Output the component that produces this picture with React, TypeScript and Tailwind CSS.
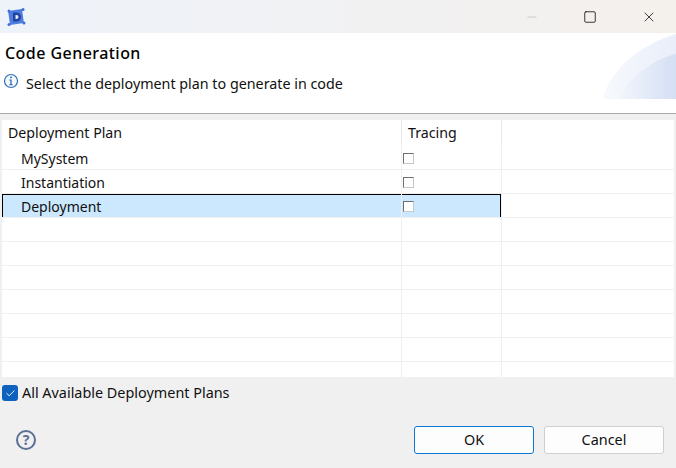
import { Check, Minus, Square, X } from "lucide-react";

const rows = ["MySystem", "Instantiation", "Deployment", "", "", "", "", "", "", ""];

function AppIcon() {
  return (
    <svg width="20" height="20" viewBox="0 0 20 20">
      <rect x="3" y="3" width="14" height="14" fill="#4d7de0" transform="rotate(-8 10 10)" />
      <circle cx="3" cy="4" r="1.5" fill="#3f6fd6" />
      <circle cx="17" cy="2.5" r="1.5" fill="#3f6fd6" />
      <circle cx="3" cy="17.5" r="1.5" fill="#3f6fd6" />
      <circle cx="18" cy="16" r="1.5" fill="#3f6fd6" />
      <path d="M7 5.5 h3.5 a4.5 4.5 0 0 1 0 9 h-3.5 z" fill="#21449f" />
      <path d="M9.5 8 h1 a2 2 0 0 1 0 4 h-1 z" fill="#e4ecfc" />
    </svg>
  );
}

function InfoIcon() {
  return (
    <svg width="16" height="16" viewBox="0 0 16 16" className="-ml-[2px] -mt-[6px]">
      <circle cx="8" cy="8" r="6.5" fill="#f4f9fe" stroke="#2f6fb5" strokeWidth="1.2" />
      <rect x="7.2" y="3.6" width="1.6" height="1.6" fill="#2a62a3" />
      <path d="M6.4 6.6 h2.2 v4.6 h1 v1 h-3.2 v-1 h1 v-3.6 h-1 z" fill="#2a62a3" />
    </svg>
  );
}

export default function App() {
  return (
    <div className="flex h-[468px] w-[676px] flex-col overflow-hidden bg-[#f0f0f0] font-['Noto_Sans',sans-serif] text-[14.4px] text-[#111]">
      {/* title bar */}
      <div className="flex h-[33px] shrink-0 items-center justify-between bg-gradient-to-r from-[#eef3fa] to-[#f4f0ec] pl-[6px]">
        <AppIcon />
        <div className="flex items-center">
          <div className="flex w-[52px] justify-center"><Minus size={14} strokeWidth={1} className="text-[#b5b5b5]" /></div>
          <div className="flex w-[64px] justify-center"><Square size={14} strokeWidth={1.4} className="text-[#111]" /></div>
          <div className="flex w-[54px] justify-center"><X size={16} strokeWidth={1.2} className="text-[#111]" /></div>
        </div>
      </div>

      {/* header */}
      <div className="relative h-[80px] shrink-0 bg-white pl-[5px] pt-[10px]">
        <div className="text-[16px] font-medium leading-[20px] tracking-[0.45px] text-black">Code Generation</div>
        <div className="mt-[11px] flex items-center gap-[7px] text-[14.3px] leading-[20px]">
          <InfoIcon />
          <span>Select the deployment plan to generate in code</span>
        </div>
        <svg className="absolute right-0 top-0" width="74" height="66" viewBox="0 0 74 66">
          <defs>
            <linearGradient id="band" x1="0" x2="1" y1="0" y2="0">
              <stop offset="0" stopColor="#f7f9fd" />
              <stop offset="1" stopColor="#e9eefa" />
            </linearGradient>
            <linearGradient id="band2" x1="0" x2="1" y1="0" y2="0">
              <stop offset="0" stopColor="#f2f5fc" />
              <stop offset="1" stopColor="#d5dff4" />
            </linearGradient>
          </defs>
          <path d="M1 66 C6 40 36 12 74 1 V66 Z" fill="url(#band)" />
          <path d="M17 66 C24 48 48 27 74 21 V66 Z" fill="url(#band2)" />
        </svg>
      </div>
      <div className="h-[1px] shrink-0 bg-[#a9a9a9]" />

      {/* table */}
      <div className="mx-[2px] mt-[6px] h-[257px] shrink-0 overflow-hidden bg-white">
        <div className="flex h-[26px] items-center text-[14.2px] leading-[20px]">
          <div className="w-[399px] pl-[6px]">Deployment Plan</div>
          <div className="h-full w-[1px] bg-[#e9e9e9]" />
          <div className="w-[99px] pl-[6px]">Tracing</div>
          <div className="h-full w-[1px] bg-[#e9e9e9]" />
        </div>
        {rows.map((name, i) => (
          <div key={i} className="flex h-[24px] items-stretch border-b border-[#f0f0f0] text-[14px]">
            <div className={i === 2 ? "flex w-[399px] items-center border-t border-l border-black bg-[#cce8ff] pl-[18px] pt-[1px]" : "flex w-[399px] items-center pl-[19px] pt-[2px]"}>{name}</div>
            <div className="w-[1px] bg-[#eceff5]" />
            <div className={i === 2 ? "flex w-[99px] items-center border-t border-r border-black bg-[#cce8ff] pl-[1px] pt-[1px]" : "flex w-[99px] items-center pl-[1px] pt-[2px]"}>
              {i < 3 && <div className="h-[11px] w-[11px] border border-[#c8c8c4] border-l-[#6e6e6e] border-t-[#6e6e6e] bg-white" />}
            </div>
            <div className="w-[1px] bg-[#eceff5]" />
          </div>
        ))}
      </div>

      {/* all plans checkbox */}
      <div className="mt-[6px] flex h-[20px] items-center gap-[4px] pl-[2px]">
        <div className="flex h-[16px] w-[16px] items-center justify-center rounded-[3px] bg-[#0d62c0]">
          <Check size={11} strokeWidth={2} className="text-white" />
        </div>
        <span>All Available Deployment Plans</span>
      </div>

      {/* footer */}
      <div className="mt-[23px] flex items-center justify-between pl-[16px] pr-[12px]">
        <div className="flex h-[20px] w-[20px] items-center justify-center rounded-full border-2 border-[#5c6f94] text-[14px] font-bold leading-none text-[#5c6f94]">?</div>
        <div className="flex gap-[10px]">
          <button className="h-[28px] w-[120px] rounded-[3px] border border-[#0a78d4] bg-[#fdfdfd]">OK</button>
          <button className="h-[28px] w-[120px] rounded-[3px] border border-[#d0d0d0] bg-[#fdfdfd]">Cancel</button>
        </div>
      </div>
    </div>
  );
}
